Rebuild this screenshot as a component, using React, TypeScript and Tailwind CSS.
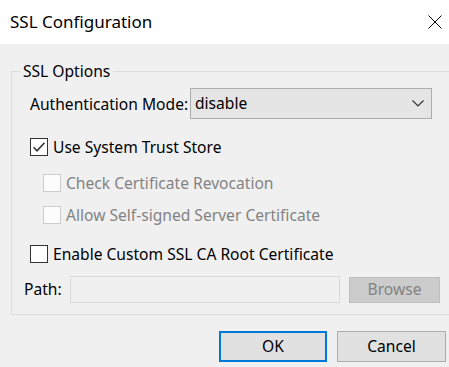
import React from "react";

function Box({ checked, disabled }: { checked?: boolean; disabled?: boolean }) {
  return (
    <span
      className={
        "w-[18px] h-[18px] border flex items-center justify-center shrink-0 " +
        (disabled ? "border-[#cccccc] bg-[#fcfcfc]" : "border-[#333333] bg-white")
      }
    >
      {checked && (
        <svg width="14" height="14" viewBox="0 0 14 14">
          <path d="M1.5 7.2 L5 10.8 L12.5 2.8" fill="none" stroke="#333333" strokeWidth="1.6" />
        </svg>
      )}
    </span>
  );
}

export default function App() {
  return (
    <div className="w-[449px] h-[367px] bg-[#f0f0f0] overflow-hidden text-[15.6px] text-black font-['Noto_Sans',sans-serif]">
      <div className="h-[44px] bg-white flex items-center">
        <span className="pl-[10px] text-[17px]">SSL Configuration</span>
        <svg className="ml-auto mr-[7px]" width="14" height="14" viewBox="0 0 14 14">
          <path d="M0.5 0.5 L13.5 13.5 M13.5 0.5 L0.5 13.5" stroke="#000" strokeWidth="1" />
        </svg>
      </div>
      <fieldset className="ml-[11px] mt-[17px] w-[450px] border border-[#dcdcdc] pb-[11px]">
        <legend className="ml-[8px] px-[3px] leading-[20px]">SSL Options</legend>
        <div className="pl-[18px]">
          <div className="mt-[7px] flex items-center">
            <span className="w-[160px] leading-[20px]">Authentication Mode:</span>
            <div className="w-[242px] h-[31px] border border-[#adadad] bg-[#e5e5e5] flex items-center pl-[4px] pr-[7px]">
              <span>disable</span>
              <svg className="ml-auto" width="12" height="7" viewBox="0 0 12 7">
                <path d="M0.5 0.5 L6 6 L11.5 0.5" fill="none" stroke="#333" strokeWidth="1.2" />
              </svg>
            </div>
          </div>
          <div className="mt-[18px] h-[20px] flex items-center gap-[5px]">
            <Box checked />
            <span className="leading-[20px]">Use System Trust Store</span>
          </div>
          <div className="mt-[16px] ml-[13px] h-[20px] flex items-center gap-[5px] text-[#838383]">
            <Box disabled />
            <span className="leading-[20px]">Check Certificate Revocation</span>
          </div>
          <div className="mt-[12px] ml-[13px] h-[20px] flex items-center gap-[5px] text-[#838383]">
            <Box disabled />
            <span className="leading-[20px]">Allow Self-signed Server Certificate</span>
          </div>
          <div className="mt-[19px] h-[20px] flex items-center gap-[5px]">
            <Box />
            <span className="leading-[20px]">Enable Custom SSL CA Root Certificate</span>
          </div>
          <div className="mt-[12px] -ml-[6px] h-[27px] flex items-center">
            <span className="w-[46px]">Path:</span>
            <div className="w-[270px] h-[27px] border border-[#d9d9d9] bg-[#f0f0f0]" />
            <div className="ml-[9px] w-[91px] h-[26px] border border-[#bfbfbf] bg-[#cccccc] text-[#838383] flex items-center justify-center">
              Browse
            </div>
          </div>
        </div>
      </fieldset>
      <div className="mt-[16px] flex justify-end gap-[10px] pr-[3px]">
        <div className="w-[108px] h-[31px] border-2 border-[#0078d7] bg-[#e1e1e1] flex items-center justify-center">OK</div>
        <div className="w-[109px] h-[31px] border border-[#adadad] bg-[#e1e1e1] flex items-center justify-center">Cancel</div>
      </div>
    </div>
  );
}
